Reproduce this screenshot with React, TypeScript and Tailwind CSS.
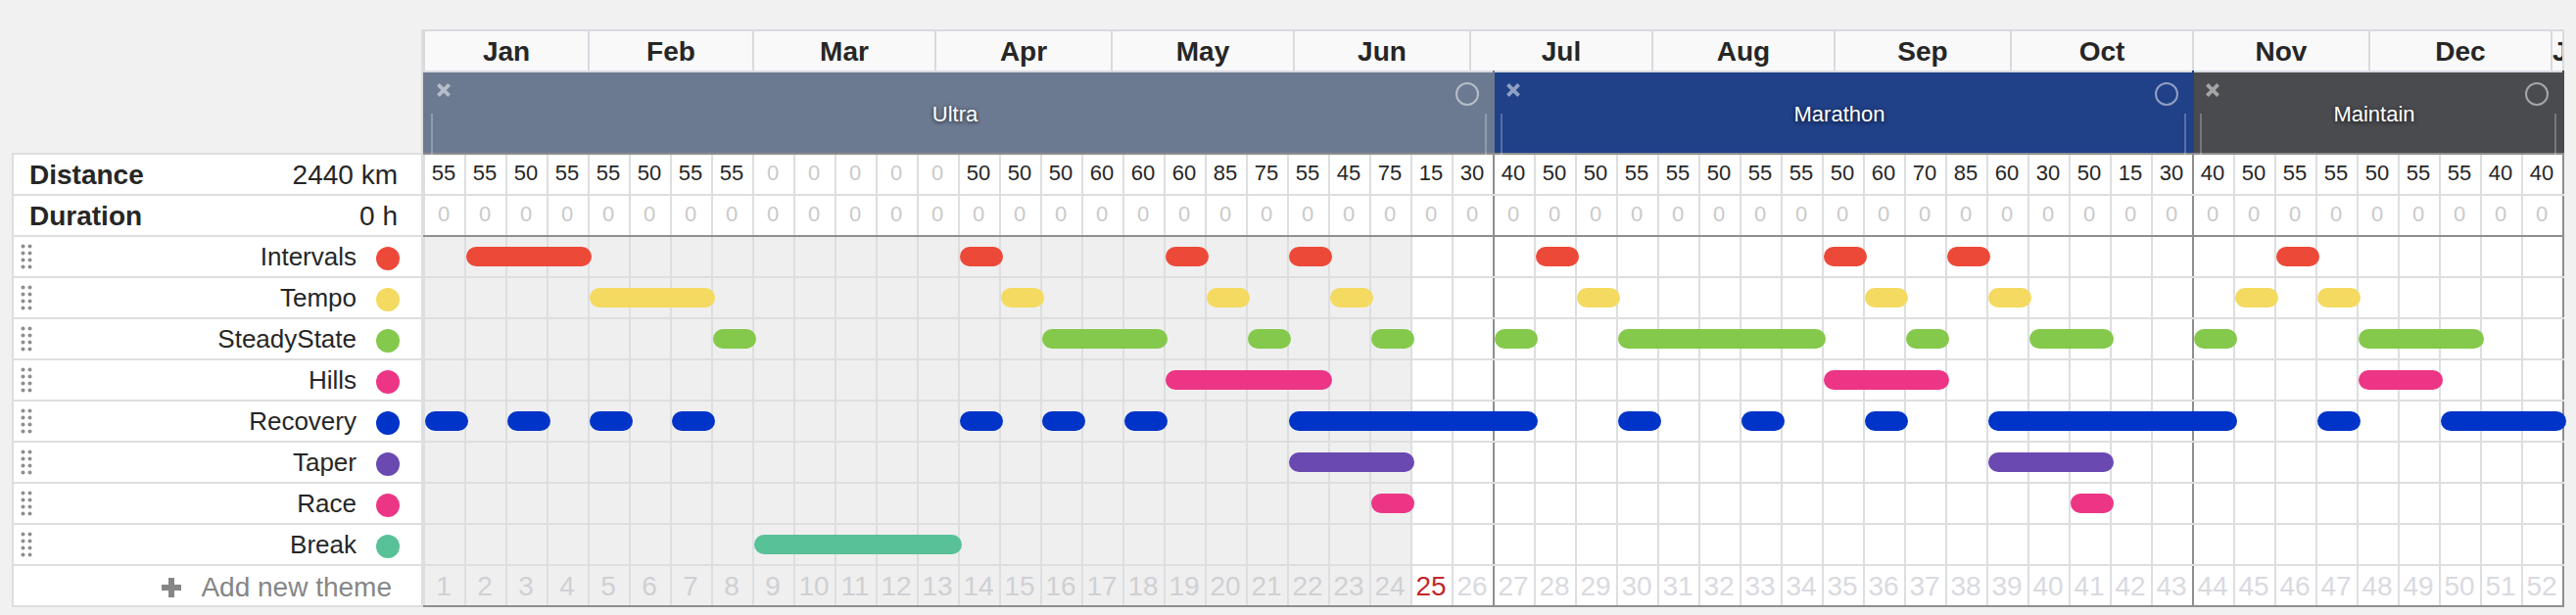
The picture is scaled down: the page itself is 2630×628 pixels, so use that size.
import React from "react";

type Theme = { name: string; color: string; spans: [number, number][] };

const months = [
  { name: "Jan", days: 28 },
  { name: "Feb", days: 28 },
  { name: "Mar", days: 31 },
  { name: "Apr", days: 30 },
  { name: "May", days: 31 },
  { name: "Jun", days: 30 },
  { name: "Jul", days: 31 },
  { name: "Aug", days: 31 },
  { name: "Sep", days: 30 },
  { name: "Oct", days: 31 },
  { name: "Nov", days: 30 },
  { name: "Dec", days: 31 },
  { name: "Jan", days: 2 },
];

const phases = [
  { name: "Ultra", weeks: 26, bg: "bg-[#6c7a91]" },
  { name: "Marathon", weeks: 17, bg: "bg-[#204088]" },
  { name: "Maintain", weeks: 9, bg: "bg-[#4a4b4f]" },
];

const distance = [
  55, 55, 50, 55, 55, 50, 55, 55, 0, 0, 0, 0, 0, 50, 50, 50, 60, 60, 60, 85, 75, 55, 45, 75, 15, 30,
  40, 50, 50, 55, 55, 50, 55, 55, 50, 60, 70, 85, 60, 30, 50, 15, 30, 40, 50, 55, 55, 50, 55, 55, 40, 40,
];
const duration = distance.map(() => 0);
const weeks = distance.map((_, i) => i + 1);
const currentWeek = 25;
const phaseEnds = [26, 43, 52];

// Each span is [first week, number of weeks].
const themes: Theme[] = [
  { name: "Intervals", color: "bg-[#ed4939]", spans: [[2, 3], [14, 1], [19, 1], [22, 1], [28, 1], [35, 1], [38, 1], [46, 1]] },
  { name: "Tempo", color: "bg-[#f4da60]", spans: [[5, 3], [15, 1], [20, 1], [23, 1], [29, 1], [36, 1], [39, 1], [45, 1], [47, 1]] },
  { name: "SteadyState", color: "bg-[#84c94b]", spans: [[8, 1], [16, 3], [21, 1], [24, 1], [27, 1], [30, 5], [37, 1], [40, 2], [44, 1], [48, 3]] },
  { name: "Hills", color: "bg-[#ec3685]", spans: [[19, 4], [35, 3], [48, 2]] },
  { name: "Recovery", color: "bg-[#0033c7]", spans: [[1, 1], [3, 1], [5, 1], [7, 1], [14, 1], [16, 1], [18, 1], [22, 6], [30, 1], [33, 1], [36, 1], [39, 6], [47, 1], [50, 3]] },
  { name: "Taper", color: "bg-[#6a49b0]", spans: [[22, 3], [39, 3]] },
  { name: "Race", color: "bg-[#ec3685]", spans: [[24, 1], [41, 1]] },
  { name: "Break", color: "bg-[#58c197]", spans: [[9, 5]] },
];

// The left padding shows the row's background as the first vertical rule.
const weekGrid = "grid grid-cols-[repeat(52,minmax(0,1fr))] pl-0.5";

function edge(week: number) {
  return phaseEnds.includes(week) ? "border-[#8e8e8e]" : "border-[#dddee0]";
}

function Grip() {
  return (
    <svg viewBox="0 0 12 26" className="h-[26px] w-3" fill="#8f8f8f" aria-hidden="true">
      {[2.5, 9.5, 16.5, 23.5].map((y) => (
        <g key={y}>
          <circle cx="2.5" cy={y} r="2" />
          <circle cx="9.5" cy={y} r="2" />
        </g>
      ))}
    </svg>
  );
}

function TotalRow({ label, total }: { label: string; total: string }) {
  return (
    <div className="flex h-[42px] items-start justify-between border-b-2 border-[#dddee0] pr-6 pl-4 text-[28px] leading-[42px]">
      <strong>{label}</strong>
      <span>{total}</span>
    </div>
  );
}

function ValueRow({ label, values, line }: { label: string; values: number[]; line: string }) {
  return (
    <div aria-label={label} className={`${weekGrid} h-[42px] border-b-2 bg-[#dddee0] ${line}`}>
      {values.map((v, i) => (
        <div
          key={i}
          className={`border-r-2 bg-white pr-0.5 text-center text-[22px] leading-[38px] ${edge(i + 1)} ${v ? "text-[#262626]" : "text-[#cacaca]"}`}
        >
          {v}
        </div>
      ))}
    </div>
  );
}

function ThemeLane({ theme }: { theme: Theme }) {
  return (
    <div className="relative h-[42px] border-b-2 border-[#dddee0]">
      <div className={`${weekGrid} h-full bg-[#dddee0]`}>
        {weeks.map((w) => (
          <div key={w} className={`border-r-2 ${edge(w)} ${w < currentWeek ? "bg-[#efefef]" : "bg-white"}`} />
        ))}
      </div>
      <div className={`${weekGrid} absolute inset-0 items-center`}>
        {theme.spans.map(([start, count]) => (
          <div
            key={start}
            className={`-mr-0.5 h-5 rounded-full ${theme.color}`}
            style={{ gridColumn: `${start} / span ${count}`, gridRow: 1 }}
          />
        ))}
      </div>
    </div>
  );
}

function Phase({ name, weeks: count, bg }: { name: string; weeks: number; bg: string }) {
  return (
    <div
      className={`relative flex items-center justify-center pt-1 pr-2.5 ${bg}`}
      style={{ gridColumn: `span ${count}` }}
    >
      <span className="text-[22px] leading-7 text-white [text-shadow:0_1px_4px_rgba(0,0,0,0.8)]">{name}</span>
      <span className={`absolute -top-0.5 right-0 h-0.5 w-0.5 ${bg}`} />
      <button type="button" aria-label={`Remove ${name}`} className="absolute top-[11px] left-3 text-white/50">
        <svg viewBox="0 0 14 14" className="h-3.5 w-3.5 overflow-visible" stroke="currentColor" strokeWidth="3.8" aria-hidden="true">
          <path d="M1.4 1.4 12.6 12.6M12.6 1.4 1.4 12.6" />
        </svg>
      </button>
      <button
        type="button"
        aria-label={`Color of ${name}`}
        className="absolute top-2.5 right-4 h-6 w-6 rounded-full border-2 border-white/50"
      />
      <span className="absolute -bottom-0.5 left-1.5 z-10 h-[42px] w-0.5 bg-white/25" />
      <span className="absolute right-2 -bottom-0.5 z-10 h-[42px] w-0.5 bg-white/25" />
    </div>
  );
}

export default function App() {
  return (
    <main className="flex min-h-screen items-start bg-[#f1f1f1] px-3 pt-[30px] font-['Liberation_Sans',Arial,sans-serif] text-[#262626]">
      <aside className="mt-[126px] w-[418px] shrink-0 border-2 border-r-0 border-[#dddee0] bg-white">
        <TotalRow label="Distance" total="2440 km" />
        <TotalRow label="Duration" total="0 h" />
        {themes.map((t) => (
          <div key={t.name} className="flex h-[42px] items-center border-b-2 border-[#dddee0] pr-[22px] pl-[7px]">
            <Grip />
            <span className="ml-auto text-[26px] leading-10">{t.name}</span>
            <span className={`mt-1 ml-5 h-6 w-6 rounded-full ${t.color}`} />
          </div>
        ))}
        <button type="button" className="flex h-10 w-full items-center justify-end pt-1 pr-[30px] text-[28px] leading-9 text-[#868686]">
          <svg viewBox="0 0 20 20" className="mr-5 h-5 w-5" fill="currentColor" aria-hidden="true">
            <path d="M7 0h6v7h7v6h-7v7H7v-7H0V7h7z" />
          </svg>
          Add new theme
        </button>
      </aside>

      <section className="min-w-0 flex-1 border-l-2 border-[#dddee0]">
        <div
          className="grid h-11 border-y-2 border-l-2 border-[#d9dae0] bg-[#f9f9f9]"
          style={{ gridTemplateColumns: months.map((m) => `minmax(0, ${m.days}fr)`).join(" ") }}
        >
          {months.map((m, i) => (
            <div
              key={i}
              className="h-10 overflow-hidden border-r-2 border-[#d9dae0] text-center text-[28px] leading-[42px] font-bold"
            >
              {m.name}
            </div>
          ))}
        </div>
        <div className={`${weekGrid} h-[84px] border-b-2 border-[#8e8e8e] bg-[#6c7a91]`}>
          {phases.map((p) => (
            <Phase key={p.name} {...p} />
          ))}
        </div>
        <ValueRow label="Distance" values={distance} line="border-[#dddee0]" />
        <ValueRow label="Duration" values={duration} line="border-[#8e8e8e]" />
        {themes.map((t) => (
          <ThemeLane key={t.name} theme={t} />
        ))}
        <div className={`${weekGrid} h-[42px] border-b-2 border-[#8e8e8e] bg-[#dddee0]`}>
          {weeks.map((w) => (
            <div
              key={w}
              className={`h-10 border-r-2 pr-0.5 text-center text-[28px] leading-[42px] ${edge(w)} ${w < currentWeek ? "bg-[#efefef]" : "bg-white"} ${w === currentWeek ? "text-[#c1272d]" : w < currentWeek ? "text-[#cfd0d4]" : "text-[#d9dae0]"}`}
            >
              {w}
            </div>
          ))}
        </div>
      </section>
    </main>
  );
}
